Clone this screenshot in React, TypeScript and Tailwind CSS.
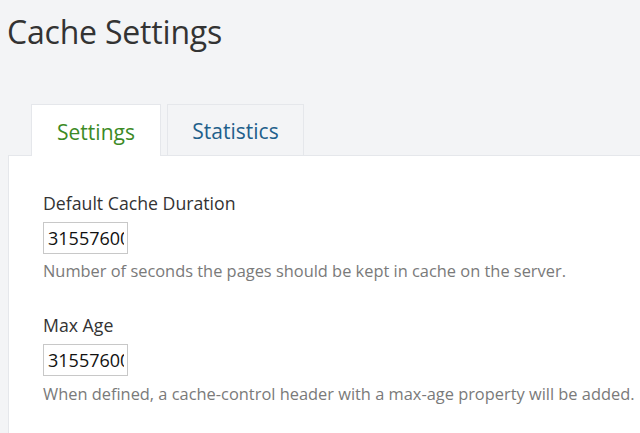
export default function App() {
  const font = { fontFamily: '"Open Sans", "Noto Sans", sans-serif' };
  return (
    <div className="h-[433px] w-[640px] overflow-hidden bg-[#f3f4f6]" style={font}>
      <h1 className="pl-[7px] pt-[10px] text-[32px] leading-[44px] text-[#333333] tracking-[-0.2px]">Cache Settings</h1>
      <div className="mt-[50px] flex pl-[31px] gap-[6px]">
        <div className="relative z-10 -mb-px flex h-[52px] w-[130px] items-center justify-center border border-b-0 border-[#e5e7eb] bg-white pt-[4px] text-[21px] text-[#3c8a26]">
          Settings
        </div>
        <div className="flex h-[51px] w-[137px] items-center justify-center border border-b-0 border-[#e5e7eb] bg-[#f3f4f6] pt-[4px] text-[21px] text-[#1f5f8b]">
          Statistics
        </div>
      </div>
      <div className="ml-2 h-[300px] border-l border-t border-[#e5e7eb] bg-white pl-[34px] pt-[35px]">
        <div className="text-[17.7px] leading-[24px] text-[#333333]">Default Cache Duration</div>
        <input
          readOnly
          value="31557600"
          className="mt-[7px] block h-[32px] w-[85px] border border-[#c8c8c8] pl-[4px] pr-[3px] text-[18px] text-[#111] outline-none"
          style={font}
        />
        <div className="mt-[5px] text-[16.4px] leading-[24px] text-[#7a7a7a] whitespace-nowrap">Number of seconds the pages should be kept in cache on the server.</div>
        <div className="mt-[30px] text-[17.7px] leading-[24px] text-[#333333]">Max Age</div>
        <input
          readOnly
          value="31557600"
          className="mt-[7px] block h-[32px] w-[85px] border border-[#c8c8c8] pl-[4px] pr-[3px] text-[18px] text-[#111] outline-none"
          style={font}
        />
        <div className="mt-[6px] text-[16.4px] leading-[24px] text-[#7a7a7a] whitespace-nowrap">When defined, a cache-control header with a max-age property will be added.</div>
      </div>
    </div>
  );
}
